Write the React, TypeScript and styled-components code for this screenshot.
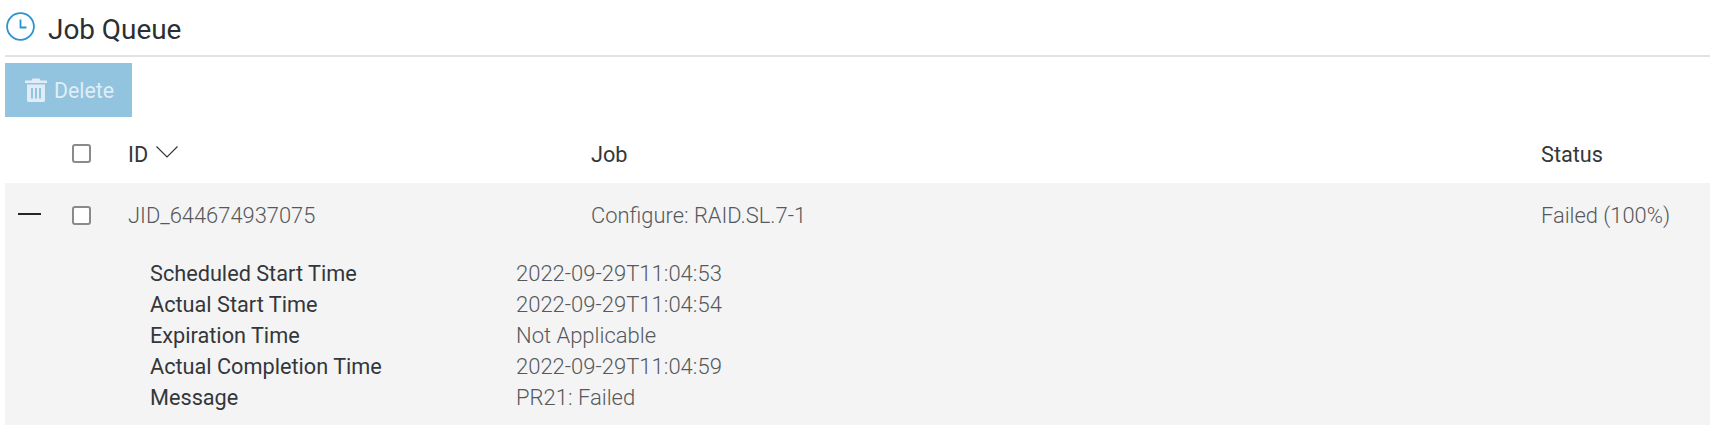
import React from "react";
import styled, { createGlobalStyle } from "styled-components";

const Global = createGlobalStyle`
  html, body { margin: 0; padding: 0; background: #fff; }
  body { font-family: Roboto, "Liberation Sans", sans-serif; }
`;
const Page = styled.div`
  width: 1710px; height: 428px; overflow: hidden; box-sizing: border-box; padding-left: 5px;
  display: flex; flex-direction: column;
`;
const TitleBar = styled.div`
  height: 54.5px; border-bottom: 2px solid #e2e2e2; display: flex; align-items: flex-start; gap: 13px;
  padding-left: 1px; flex: none;
`;
const ClockIcon = styled.svg`
  width: 29px; height: 29px; margin-top: 12px; color: #2b93cf; flex: none;
`;
const Title = styled.h1`
  margin: 11px 0 0; font-size: 27.9px; line-height: 38px; font-weight: 400; color: #2b2f33;
`;
const Toolbar = styled.div`
  padding-top: 6.5px; height: 60px; flex: none;
`;
const DeleteButton = styled.button`
  width: 127px; height: 54px; border: 0; padding: 0 0 0 20px; background: #92c3df; color: #e0edf6;
  display: flex; align-items: center; gap: 7px; font: 400 21.3px Roboto, sans-serif;
`;
const Columns = styled.div`
  display: grid; grid-template-columns: 67px 56px 463px 950px 1fr; align-items: center;
`;
const HeaderRow = styled(Columns)`
  height: 60px; color: #33373b; font-size: 21.7px; flex: none;
`;
const HeaderLabel = styled.span`
  padding-top: 2px;
`;
const Panel = styled.div`
  background: #f4f4f4; height: 242px; flex: none;
`;
const JobRow = styled(Columns)`
  height: 65px; color: #55595d; font-size: 21.9px; font-weight: 300;
`;
const Collapse = styled.span`
  display: block; width: 23px; height: 2px; background: #24262a; margin: 0 0 4px 13px;
`;
const Check = styled.span`
  display: block; width: 15px; height: 15px; border: 2px solid #8a8a8a; border-radius: 3px; background: #fff;
`;
const IdHead = styled(HeaderLabel)`
  display: flex; align-items: center; gap: 8px;
`;
const Chevron = styled.svg`
  margin-top: -4px;
`;
const Details = styled.dl`
  margin: 0; padding: 10px 0 0 145px; display: grid; grid-template-columns: 366px 1fr; grid-auto-rows: 31.1px;
  align-items: center; font-size: 21.7px;
`;
const Label = styled.dt`
  color: #33373b;
`;
const Value = styled.dd`
  margin: 0; color: #55595d; font-weight: 300; font-size: 22px;
`;

const rows = [
  ["Scheduled Start Time", "2022-09-29T11:04:53"],
  ["Actual Start Time", "2022-09-29T11:04:54"],
  ["Expiration Time", "Not Applicable"],
  ["Actual Completion Time", "2022-09-29T11:04:59"],
  ["Message", "PR21: Failed"],
];

export default function App() {
  return (
    <Page>
      <Global />
      <TitleBar>
        <ClockIcon viewBox="0 0 29 29" fill="none" stroke="currentColor" strokeWidth="1.800">
          <circle cx="14.5" cy="14.5" r="13.4" />
          <path d="M14.5 7.500v8h6" />
        </ClockIcon>
        <Title>Job Queue</Title>
      </TitleBar>
      <Toolbar>
        <DeleteButton disabled>
          <svg width="22" height="24" viewBox="0 0 22 24" fill="currentColor">
            <path d="M7.500 0.500h7l1 2H22v2.500H0V2.500h6.500z" />
            <path fillRule="evenodd" d="M2 6.500h18v16a1.500 1.500 0 0 1-1.500 1.500h-15A1.500 1.500 0 0 1 2 22.500zM6 10v10.500h2V10zm4 0v10.500h2V10zm4 0v10.500h2V10z" />
          </svg>
          Delete
        </DeleteButton>
      </Toolbar>
      <HeaderRow>
        <span />
        <Check />
        <IdHead>
          ID
          <Chevron width="22" height="12" viewBox="0 0 22 12" fill="none" stroke="#33373b" strokeWidth="1.200">
            <path d="M0.500 0.500l10.500 10.500 10.500-10.500" />
          </Chevron>
        </IdHead>
        <HeaderLabel>Job</HeaderLabel>
        <HeaderLabel>Status</HeaderLabel>
      </HeaderRow>
      <Panel>
        <JobRow>
          <Collapse />
          <Check />
          <span>JID_644674937075</span>
          <span>Configure: RAID.SL.7-1</span>
          <span>Failed (100%)</span>
        </JobRow>
        <Details>
          {rows.map(([k, v]) => (
            <React.Fragment key={k}>
              <Label>{k}</Label>
              <Value>{v}</Value>
            </React.Fragment>
          ))}
        </Details>
      </Panel>
    </Page>
  );
}
